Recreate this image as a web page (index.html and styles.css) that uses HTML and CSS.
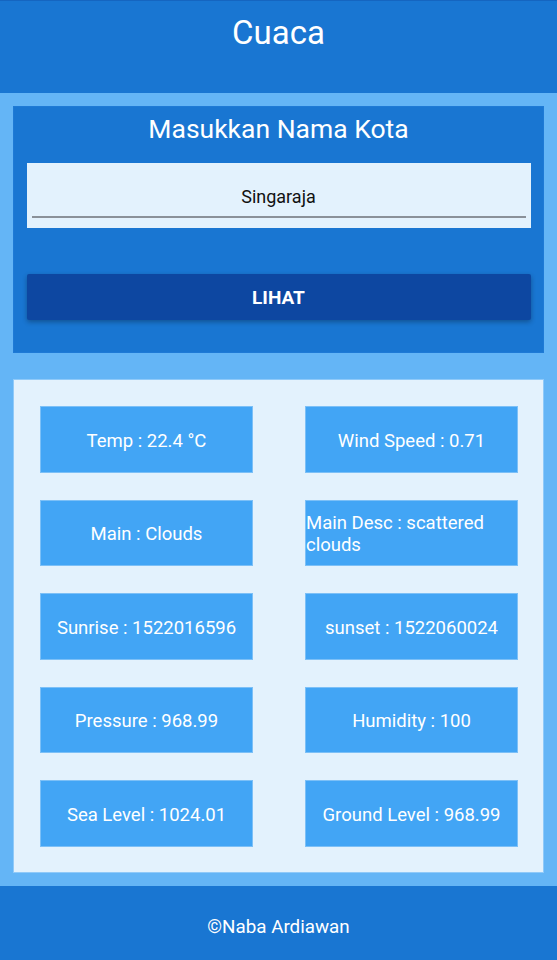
FILE: index.html
```html
<!DOCTYPE html>
<html lang="id">
<head>
<meta charset="utf-8">
<title>Cuaca</title>
<link rel="stylesheet" href="styles.css">
</head>
<body>
<header class="app-bar">Cuaca</header>
<main class="content">
  <section class="search-card">
    <h2 class="search-title">Masukkan Nama Kota</h2>
    <div class="field-box">
      <div class="field">Singaraja</div>
    </div>
    <button class="btn">LIHAT</button>
  </section>
  <section class="result-card">
    <div class="cell">Temp : 22.4 °C</div>
    <div class="cell">Wind Speed : 0.71</div>
    <div class="cell">Main : Clouds</div>
    <div class="cell cell-left">Main Desc : scattered clouds</div>
    <div class="cell">Sunrise : 1522016596</div>
    <div class="cell">sunset : 1522060024</div>
    <div class="cell">Pressure : 968.99</div>
    <div class="cell">Humidity : 100</div>
    <div class="cell">Sea Level : 1024.01</div>
    <div class="cell">Ground Level : 968.99</div>
  </section>
</main>
<footer class="footer">©Naba Ardiawan</footer>
</body>
</html>
```
FILE: styles.css
```css
* { box-sizing: border-box; }
html, body { margin: 0; padding: 0; }
body {
  font-family: Roboto, "Noto Sans", sans-serif;
  width: 557px;
  height: 960px;
  overflow: hidden;
  background: #64b5f6;
  color: #fff;
}
.app-bar {
  height: 93px;
  background: #1976d2;
  border-top: 1px solid #1565c0;
  padding-top: 12px;
  font-size: 33px;
  line-height: 40px;
  text-align: center;
}
.content {
  background: #64b5f6;
  padding: 13px;
  display: flex;
  flex-direction: column;
  gap: 26px;
}
.search-card {
  height: 247px;
  background: #1976d2;
  border: 1px solid #1e7ad6;
  padding: 7px 12.5px 0;
}
.search-title {
  margin: 0;
  font-weight: 400;
  font-size: 26.5px;
  line-height: 30px;
  text-align: center;
}
.field-box {
  margin-top: 19px;
  height: 65px;
  background: #e3f2fd;
  padding: 0 5px;
}
.field {
  padding-top: 22px;
  padding-bottom: 8px;
  line-height: 23px;
  font-size: 18px;
  color: #111;
  text-align: center;
  border-bottom: 2px solid #8a9199;
}
.btn {
  display: block;
  width: 100%;
  margin-top: 46px;
  height: 46px;
  border: none;
  border-radius: 2px;
  background: #0d47a1;
  color: #fff;
  font-family: Roboto, "Noto Sans", sans-serif;
  font-weight: 700;
  font-size: 19px;
  padding-top: 2px;
  box-shadow: 0 2px 5px rgba(0, 0, 0, 0.3);
}
.result-card {
  height: 494px;
  background: #e3f2fd;
  border: 1px solid #90caf9;
  padding: 26px 25px 0 26px;
  display: grid;
  grid-template-columns: 213px 213px;
  grid-auto-rows: 66.5px;
  column-gap: 52px;
  row-gap: 27px;
}
.cell {
  background: #42a5f5;
  border: 1px solid #7cc0f7;
  padding-top: 3px;
  display: flex;
  align-items: center;
  justify-content: center;
  text-align: center;
  font-size: 18.5px;
  line-height: 22px;
}
.cell-left {
  justify-content: flex-start;
  text-align: left;
}
.footer {
  height: 74px;
  background: #1976d2;
  padding-top: 30px;
  font-size: 18.8px;
  line-height: 22px;
  text-align: center;
}
```
